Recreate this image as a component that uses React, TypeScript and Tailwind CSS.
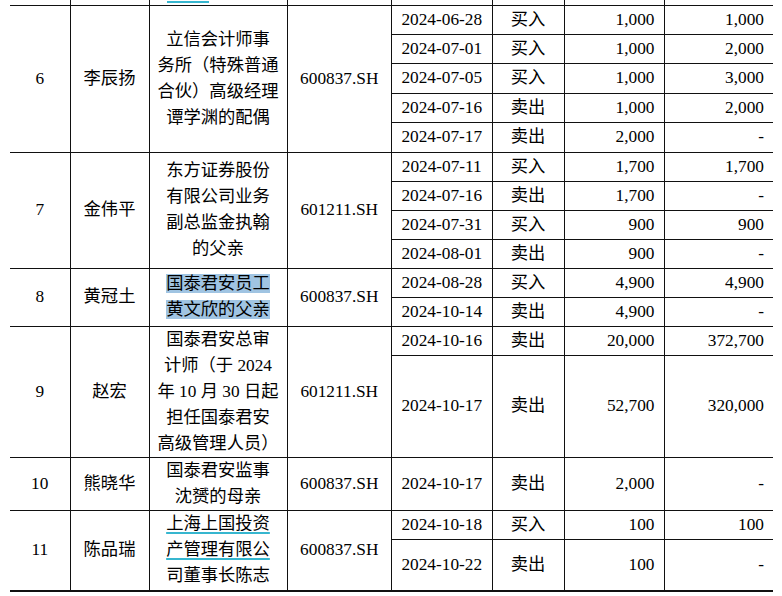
import type { ReactNode } from "react";
import clsx from "clsx";

type Trade = { date: string; side: string; qty: string; left: string; h: string };
type Group = { no: string; name: string; rel: ReactNode[]; code: string; trades: Trade[] };

const hl = (t: string) => <span className="bg-[#a0c4e2]">{t}</span>;
const ul = (t: string) => (
  <span className="underline decoration-[#36b6cf] decoration-2 underline-offset-[3px]">{t}</span>
);

const groups: Group[] = [
  {
    no: "6",
    name: "李辰扬",
    rel: ["立信会计师事", "务所（特殊普通", "合伙）高级经理", "谭学渊的配偶"],
    code: "600837.SH",
    trades: [
      { date: "2024-06-28", side: "买入", qty: "1,000", left: "1,000", h: "h-[29px]" },
      { date: "2024-07-01", side: "买入", qty: "1,000", left: "2,000", h: "h-[29px]" },
      { date: "2024-07-05", side: "买入", qty: "1,000", left: "3,000", h: "h-[30px]" },
      { date: "2024-07-16", side: "卖出", qty: "1,000", left: "2,000", h: "h-[29px]" },
      { date: "2024-07-17", side: "卖出", qty: "2,000", left: "-", h: "h-[30px]" },
    ],
  },
  {
    no: "7",
    name: "金伟平",
    rel: ["东方证券股份", "有限公司业务", "副总监金执翰", "的父亲"],
    code: "601211.SH",
    trades: [
      { date: "2024-07-11", side: "买入", qty: "1,700", left: "1,700", h: "h-[29px]" },
      { date: "2024-07-16", side: "卖出", qty: "1,700", left: "-", h: "h-[29px]" },
      { date: "2024-07-31", side: "买入", qty: "900", left: "900", h: "h-[29px]" },
      { date: "2024-08-01", side: "卖出", qty: "900", left: "-", h: "h-[29px]" },
    ],
  },
  {
    no: "8",
    name: "黄冠土",
    rel: [hl("国泰君安员工"), hl("黄文欣的父亲")],
    code: "600837.SH",
    trades: [
      { date: "2024-08-28", side: "买入", qty: "4,900", left: "4,900", h: "h-[29px]" },
      { date: "2024-10-14", side: "卖出", qty: "4,900", left: "-", h: "h-[29px]" },
    ],
  },
  {
    no: "9",
    name: "赵宏",
    rel: ["国泰君安总审", "计师（于 2024", "年 10 月 30 日起", "担任国泰君安", "高级管理人员）"],
    code: "601211.SH",
    trades: [
      { date: "2024-10-16", side: "卖出", qty: "20,000", left: "372,700", h: "h-[29px]" },
      { date: "2024-10-17", side: "卖出", qty: "52,700", left: "320,000", h: "h-[102px]" },
    ],
  },
  {
    no: "10",
    name: "熊晓华",
    rel: ["国泰君安监事", "沈赟的母亲"],
    code: "600837.SH",
    trades: [{ date: "2024-10-17", side: "卖出", qty: "2,000", left: "-", h: "h-[53px]" }],
  },
  {
    no: "11",
    name: "陈品瑞",
    rel: [ul("上海上国投资"), ul("产管理有限公"), "司董事长陈志"],
    code: "600837.SH",
    trades: [
      { date: "2024-10-18", side: "买入", qty: "100", left: "100", h: "h-[29px]" },
      { date: "2024-10-22", side: "卖出", qty: "100", left: "-", h: "h-[52px]" },
    ],
  },
];

const cell = "border border-[#111] p-0 align-middle";

export default function App() {
  return (
    <div
      className="min-h-screen bg-white pl-[10px] text-[17.3px] leading-[26px] text-black"
      style={{ fontFamily: "'Liberation Serif', 'Noto Sans CJK SC', serif" }}
    >
      <table className="w-[763px] table-fixed border-collapse">
        <colgroup>
          <col className="w-[60px]" />
          <col className="w-[79px]" />
          <col className="w-[138px]" />
          <col className="w-[104.5px]" />
          <col className="w-[100.5px]" />
          <col className="w-[72px]" />
          <col className="w-[100px]" />
          <col className="w-[109px]" />
        </colgroup>
        <tbody>
          {/* tail of the previous row, cut off by the page edge */}
          <tr className="h-[5px]">
            <td className={clsx(cell, "border-t-0 border-l-0")} />
            <td className={clsx(cell, "border-t-0")} />
            <td className={clsx(cell, "border-t-0 align-top")}>
              <div className="mt-[1px] ml-[17px] h-[2px] w-[42px] bg-[#36b6cf]" />
            </td>
            <td className={clsx(cell, "border-t-0")} />
            <td className={clsx(cell, "border-t-0")} />
            <td className={clsx(cell, "border-t-0")} />
            <td className={clsx(cell, "border-t-0")} />
            <td className={clsx(cell, "border-t-0 border-r-0")} />
          </tr>
          {groups.map((g, gi) => {
            const last = gi === groups.length - 1;
            return g.trades.map((t, ti) => {
              const bottom = last && ti === g.trades.length - 1;
              const n = g.trades.length;
              return (
                <tr key={g.no + t.date + ti} className={t.h}>
                  {ti === 0 && (
                    <>
                      <td rowSpan={n} className={clsx(cell, "border-l-0 text-center", last && "border-b-2")}>
                        {g.no}
                      </td>
                      <td rowSpan={n} className={clsx(cell, "text-center", last && "border-b-2")}>
                        {g.name}
                      </td>
                      <td rowSpan={n} className={clsx(cell, "text-center", last && "border-b-2")}>
                        {g.rel.map((line, i) => (
                          <div key={i} className="whitespace-nowrap">
                            {line}
                          </div>
                        ))}
                      </td>
                      <td rowSpan={n} className={clsx(cell, "text-center", last && "border-b-2")}>
                        {g.code}
                      </td>
                    </>
                  )}
                  <td className={clsx(cell, "text-center", bottom && "border-b-2")}>{t.date}</td>
                  <td className={clsx(cell, "text-center", bottom && "border-b-2")}>{t.side}</td>
                  <td className={clsx(cell, "pr-[9px] text-right", bottom && "border-b-2")}>{t.qty}</td>
                  <td className={clsx(cell, "border-r-0 pr-[9px] text-right", bottom && "border-b-2")}>
                    {t.left}
                  </td>
                </tr>
              );
            });
          })}
        </tbody>
      </table>
    </div>
  );
}
